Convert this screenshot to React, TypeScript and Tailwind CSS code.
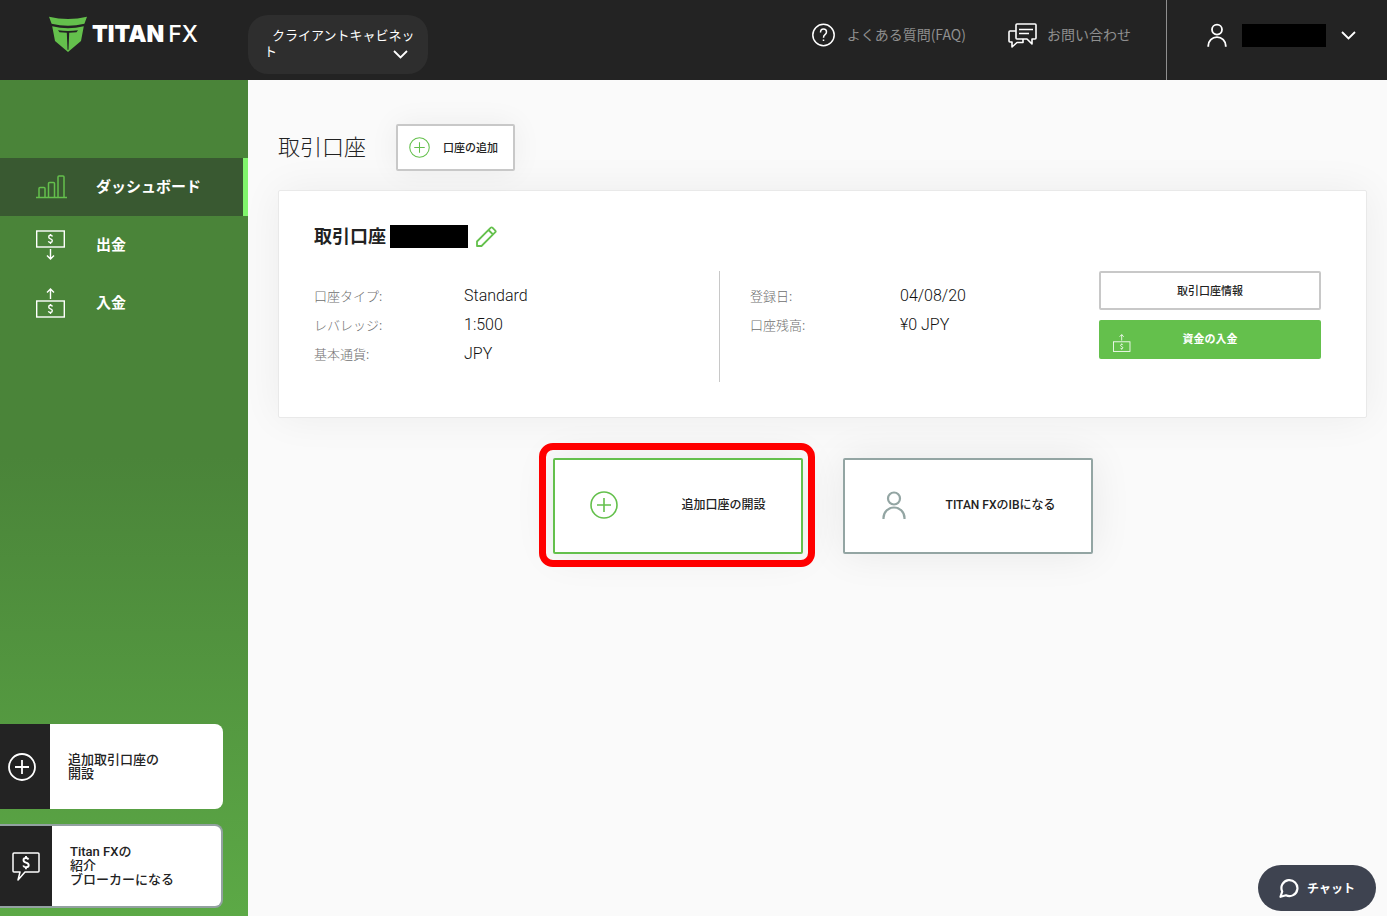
import type { ReactNode } from 'react'

const font = "font-['Noto_Sans_CJK_JP',sans-serif]"
// latin first, kana and kanji from Noto
const mixed = "font-[Roboto,'Noto_Sans_CJK_JP',sans-serif]"

function Logo() {
  return (
    <a href="#" className="flex items-start gap-1" aria-label="Titan FX">
      <svg width="39" height="36" viewBox="0 0 39 36" fill="#64c04c" className="shrink-0">
        <path d="M0 .8q19 4.400 38 0l-2.600 7q-16.400 4-32.800 0z" />
        <path d="M3.200 10.300q15.800 4 31.600 0L32 25l-13 11L6 25z" />
        <path d="M9 14.200q10 1.600 20 0l-1.500 2-7.300.6-.7 17h-1l-.7-17-7.300-.6z" fill="#232323" />
      </svg>
      <span className="mt-1 flex gap-1 font-[Inter] text-[23px] leading-7 text-white">
        <span className="font-black">TITAN</span>
        <span className="font-medium">FX</span>
      </span>
    </a>
  )
}

function Chevron() {
  return (
    <svg width="15" height="9" viewBox="0 0 15 9" fill="none" stroke="#fff" strokeWidth="1.800" className="shrink-0">
      <path d="M1 1l6.500 6.500L14 1" />
    </svg>
  )
}

function PlusCircle({ size, width }: { size: number; width: number }) {
  return (
    <svg width={size} height={size} viewBox="0 0 28 28" fill="none" stroke="currentColor" strokeWidth={width} className="shrink-0">
      <circle cx="14" cy="14" r="13" />
      <path d="M14 7v14M7 14h14" />
    </svg>
  )
}

function Person({ className, width }: { className: string; width: number }) {
  return (
    <svg viewBox="0 0 24 28" fill="none" stroke="currentColor" strokeWidth={width} className={className}>
      <circle cx="12" cy="7.500" r="6" />
      <path d="M1.500 28v-1a10.500 10.500 0 0 1 21 0v1" />
    </svg>
  )
}

function Bars() {
  return (
    <svg width="31" height="24" viewBox="0 0 31 24" fill="none" stroke="#64c04c" strokeWidth="1.500">
      <path d="M0 22.500h31M3 22v-8.500q0-1 1-1h4q1 0 1 1V22M12.500 22V8.500q0-1 1-1h4q1 0 1 1V22M22 22V2q0-1 1-1h4q1 0 1 1v20" />
    </svg>
  )
}

// bank note with an arrow below (withdraw) or above (deposit)
function Note({ up = false, className = 'h-[30px] w-[30px]' }: { up?: boolean; className?: string }) {
  const y = up ? 12 : 0
  return (
    <svg viewBox="0 0 30 30" fill="none" stroke="#fff" strokeWidth="1.400" className={className}>
      <rect x=".7" y={y + 1} width="27.600" height="16" />
      <path transform={`translate(-.5 ${y})`} d="M17 6.500q-.5-1.200-2-1.200-1.800 0-1.800 1.700 0 1.300 1.800 1.900t1.800 1.900q0 1.700-1.800 1.700-1.600 0-2.100-1.300M15 4v1.300M15 12.500V14" />
      {up ? <path d="M14.500 11V1M11 4.500L14.500 1 18 4.500" /> : <path d="M14.500 19v10M11 25.500l3.500 3.500 3.500-3.500" />}
    </svg>
  )
}

const nav: { label: string; icon: ReactNode; active?: boolean }[] = [
  { label: 'ダッシュボード', icon: <Bars />, active: true },
  { label: '出金', icon: <Note /> },
  { label: '入金', icon: <Note up /> },
]

const account = [
  ['口座タイプ:', 'Standard'],
  ['レバレッジ:', '1:500'],
  ['基本通貨:', 'JPY'],
]

const balance = [
  ['登録日:', '04/08/20'],
  ['口座残高:', '¥0 JPY'],
]

function Details({ rows }: { rows: string[][] }) {
  return (
    <dl className="grid grid-cols-[150px_1fr] pt-2.5">
      {rows.map(([k, v]) => (
        <div key={k} className="contents">
          <dt className="text-[13px] leading-[29px] font-light text-[#707070]">{k}</dt>
          <dd className={`text-base leading-[29px] font-light text-[#111] ${mixed}`}>{v}</dd>
        </div>
      ))}
    </dl>
  )
}

function Header() {
  return (
    <header className="flex h-20 items-start bg-[#232323]">
      <div className="w-[248px] shrink-0 pt-4 pl-[49px]"><Logo /></div>
      <button type="button" className="mt-[15px] flex h-[59px] w-[180px] shrink-0 items-end rounded-[20px] bg-[#2e2e2e] pr-5 pb-[15px] pl-4 text-left text-[13px] leading-4 text-white">
        <span className="-mr-6 flex-1 indent-2 break-all [line-break:anywhere]">クライアントキャビネット</span>
        <Chevron />
      </button>
      <nav className="ml-auto flex h-[70px] items-center gap-[42px] pr-[35px] text-sm text-[#8f8f8f]">
        <a href="#" className="flex items-center gap-3">
          <svg width="23" height="24" viewBox="0 0 23 24" fill="none" stroke="#fff" strokeWidth="1.500">
            <circle cx="11.500" cy="12" r="10.700" />
            <path d="M8.500 9.500q0-3.500 3-3.500t3 3q0 1.500-1.500 2.700t-1.500 3M11.500 16.500v1.500" />
          </svg>
          <span className="pb-0.5">よくある質問(FAQ)</span>
        </a>
        <a href="#" className="flex items-center gap-2.5">
          <svg width="29" height="25" viewBox="0 0 29 25" fill="none" stroke="#fff" strokeWidth="1.600" strokeLinejoin="round">
            <path d="M9 1h18q1 0 1 1v13q0 1-1 1h-3v5l-5-5H9q-1 0-1-1V2q0-1 1-1zM11 6.500h14M11 10.500h10" />
            <path d="M8 8H2q-1 0-1 1v9q0 1 1 1h2v5l5-4.500h6V16" />
          </svg>
          <span className="pb-0.5">お問い合わせ</span>
        </a>
      </nav>
      <button type="button" aria-label="account" className="flex h-20 items-center gap-[15px] border-l border-[#8f8f8f] pr-[31px] pb-2.5 pl-10">
        <Person className="h-6 w-5 text-white" width={2.2} />
        <span className="h-[23px] w-[84px] bg-black" />
        <Chevron />
      </button>
    </header>
  )
}

function Sidebar() {
  return (
    <aside className="flex w-[248px] shrink-0 flex-col justify-between bg-linear-to-b from-[#4a8439] from-45% to-[#5ca946] pt-[78px] pb-2">
      <nav>
        {nav.map(n => (
          <a key={n.label} href="#" className={`flex h-[58px] items-center pl-9 text-[15px] font-bold text-white ${
            n.active ? 'border-r-[5px] border-[#80f56c] bg-[#395931]' : ''
          }`}>
            <span className="w-[60px]">{n.icon}</span>
            <span className="pb-0.5">{n.label}</span>
          </a>
        ))}
      </nav>
      <div className={`flex flex-col gap-[15px] pr-[25px] text-[13px] leading-[14px] font-medium text-[#222] ${mixed}`}>
        <a href="#" className="flex h-[85px] overflow-hidden rounded-r-lg bg-white">
          <span className="flex w-[50px] items-center bg-[#232323] pl-2 text-white"><PlusCircle size={28} width={1.8} /></span>
          <span className="self-center pl-[18px]">追加取引口座の<br />開設</span>
        </a>
        <a href="#" className="flex h-[84px] overflow-hidden rounded-r-lg border-y-2 border-r-2 border-[#93a1a1] bg-white">
          <span className="flex w-[52px] items-center bg-[#232323] pl-3">
            <svg width="28" height="29" viewBox="0 0 28 29" fill="none" stroke="#fff" strokeWidth="1.500" strokeLinejoin="round">
              <path d="M2 1h24q1 0 1 1v17q0 1-1 1H13l-7 8 2-8H2q-1 0-1-1V2q0-1 1-1z" />
              <path d="M16.500 7.500q-.7-1.500-2.500-1.500-2.500 0-2.500 2t2.500 2.600q2.700.7 2.700 2.700t-2.700 2q-2.100 0-2.800-1.800M14 4v2M14 15.300v2" strokeWidth="1.900" />
            </svg>
          </span>
          <span className="self-center pl-[18px]">Titan FXの<br />紹介<br />ブローカーになる</span>
        </a>
      </div>
    </aside>
  )
}

export default function App() {
  return (
    <div className={`flex min-h-screen flex-col bg-[#fafafa] text-[#222] ${font}`}>
      <Header />
      <div className="flex flex-1">
        <Sidebar />
        <main className="min-w-0 flex-1 pt-11 pr-5 pl-[30px]">
          <div className="flex items-center gap-[30px]">
            <h1 className="pb-1 text-[22px] font-light">取引口座</h1>
            <button type="button" className="flex h-[47px] items-center gap-[13px] rounded-xs border-2 border-[#c8c8c8] bg-white pr-[15px] pl-[11px] text-[11px] font-medium shadow-[0_0_30px_rgba(0,0,0,0.06)]">
              <span className="text-[#64c04c]"><PlusCircle size={21} width={1.4} /></span>
              口座の追加
            </button>
          </div>

          <section className="mt-[19px] h-[228px] rounded-xs border border-[#e9e9e9] bg-white pt-[33px] pr-[45px] pl-[35px] shadow-[0_0_40px_rgba(0,0,0,0.06)]">
            <div className="flex h-6 items-center">
              <h2 className="pb-0.5 text-lg font-bold">取引口座</h2>
              <span className="ml-1 h-[23px] w-[78px] bg-black" />
              <button type="button" aria-label="edit" className="ml-2">
                <svg width="21" height="21" viewBox="0 0 21 21" fill="none" stroke="#64c04c" strokeWidth="1.800" strokeLinejoin="round">
                  <path d="M1 20v-4.500L14.800 1.700q.8-.8 1.600 0l2.900 2.900q.8.800 0 1.600L5.500 20zM12.500 4l4.500 4.500" />
                </svg>
              </button>
            </div>
            <div className="mt-[23px] grid grid-cols-[406fr_379fr_222px]">
              <div className="h-[111px] border-r border-[#c8c8c8]"><Details rows={account} /></div>
              <div className="pl-[30px]"><Details rows={balance} /></div>
              <div className="flex flex-col gap-2.5">
                <button type="button" className="h-[39px] rounded-xs border-2 border-[#c8c8c8] text-[11px] font-medium">取引口座情報</button>
                <button type="button" className="relative h-[39px] rounded-xs bg-[#64c04c] pb-0.5 text-[11px] font-bold text-white">
                  <Note up className="absolute top-[14px] left-[14px] h-[18px] w-[18px]" />
                  資金の入金
                </button>
              </div>
            </div>
          </section>

          <div className={`mt-10 flex justify-center gap-10 text-xs font-medium ${mixed}`}>
            <div className="relative">
              <button type="button" className="flex h-24 w-[250px] items-center justify-between rounded-xs border-2 border-[#64c04c] bg-white px-[35px] pb-0.5 shadow-[0_0_40px_rgba(0,0,0,0.08)]">
                <span className="text-[#64c04c]"><PlusCircle size={28} width={1.6} /></span>
                追加口座の開設
              </button>
              <span className="pointer-events-none absolute -top-[15px] -right-3 -bottom-[13px] -left-[14px] rounded-[14px] border-[7px] border-[#f00]" />
            </div>
            <button type="button" className="flex h-24 w-[250px] items-center justify-between rounded-xs border-2 border-[#93a5a3] bg-white pr-[35px] pb-0.5 pl-[37px] shadow-[0_0_40px_rgba(0,0,0,0.08)]">
              <Person className="h-7 w-6 text-[#93a5a3]" width={2.2} />
              TITAN FXのIBになる
            </button>
          </div>
        </main>
      </div>

      <button type="button" className="fixed right-[11px] bottom-[5px] flex h-[46px] w-[118px] items-center justify-center gap-2 rounded-full bg-[#3e4350] text-xs font-bold text-white">
        <svg width="20" height="20" viewBox="0 0 20 20" fill="none" stroke="#fff" strokeWidth="2.200" strokeLinejoin="round">
          <path d="M3.200 13.500A8 8 0 1 1 7 17.300L1.500 18.800z" />
        </svg>
        チャット
      </button>
    </div>
  )
}
